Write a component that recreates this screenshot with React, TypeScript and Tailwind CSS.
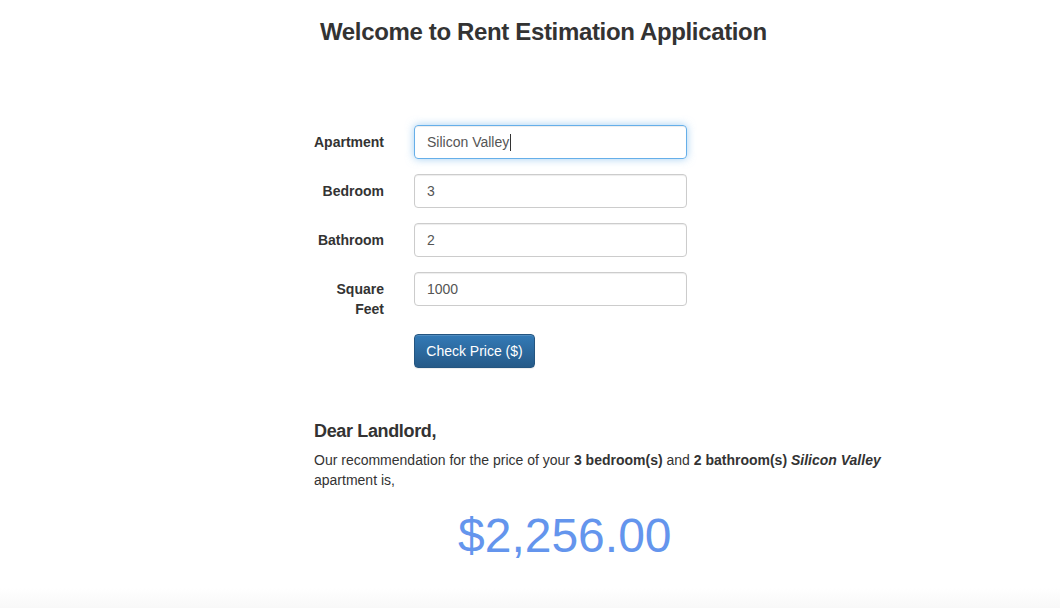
const fields = [
  { label: "Bedroom", value: "3" },
  { label: "Bathroom", value: "2" },
  { label: "Square Feet", value: "1000" },
];

export default function App() {
  return (
    <div className="min-h-[608px] bg-white text-[#333] font-['Liberation_Sans',Arial,sans-serif] flex flex-col">
      <div className="flex-1">
        {/* Title */}
        <h1 className="pt-[19px] pl-[320px] text-[24px] leading-[26px] font-bold tracking-[-0.35px]">
          Welcome to Rent Estimation Application
        </h1>

        {/* Form */}
        <form className="ml-[314px] mt-[80px] text-[14px]">
          <div className="flex gap-[30px] mb-[15px]">
            <label className="w-[70px] pt-[7px] leading-[20px] text-right font-bold">Apartment</label>
            <div className="w-[273px] h-[34px] rounded-[4px] border border-[#66afe9] px-[12px] flex items-center text-[#555] shadow-[inset_0_1px_1px_rgba(0,0,0,0.075),0_0_8px_rgba(102,175,233,0.6)]">
              <span>Silicon Valley</span>
              <span className="w-px h-[17px] bg-[#333] ml-px" />
            </div>
          </div>

          {fields.map((f) => (
            <div key={f.label} className="flex gap-[30px] mb-[15px]">
              <label className="w-[70px] pt-[7px] leading-[20px] text-right font-bold">{f.label}</label>
              <input
                readOnly
                value={f.value}
                className="w-[273px] h-[34px] rounded-[4px] border border-[#ccc] px-[12px] text-[#555] outline-none shadow-[inset_0_1px_1px_rgba(0,0,0,0.075)]"
              />
            </div>
          ))}

          <div className="pl-[100px]">
            <button
              type="button"
              className="w-[121px] h-[34px] rounded-[4px] border border-[#245580] bg-gradient-to-b from-[#337ab7] to-[#265a88] text-white leading-[20px] shadow-[inset_0_1px_0_rgba(255,255,255,0.15),0_1px_1px_rgba(0,0,0,0.075)]"
            >
              Check Price ($)
            </button>
          </div>
        </form>

        {/* Result */}
        <div className="ml-[314px] w-[600px] mt-[53px]">
          <h4 className="text-[18px] leading-[20px] font-bold tracking-[-0.35px]">Dear Landlord,</h4>
          <p className="mt-[9px] text-[14px] leading-[20px]">
            Our recommendation for the price of your <b>3 bedroom(s)</b> and <b>2 bathroom(s)</b>{" "}
            <b>
              <i>Silicon Valley</i>
            </b>{" "}
            apartment is,
          </p>
          <div className="pl-[144px] mt-[19px] text-[48px] leading-[53px] text-[#6495ed]">$2,256.00</div>
        </div>
      </div>

      <div className="h-[20px] bg-gradient-to-b from-white to-[#f8f8f8]" />
    </div>
  );
}
